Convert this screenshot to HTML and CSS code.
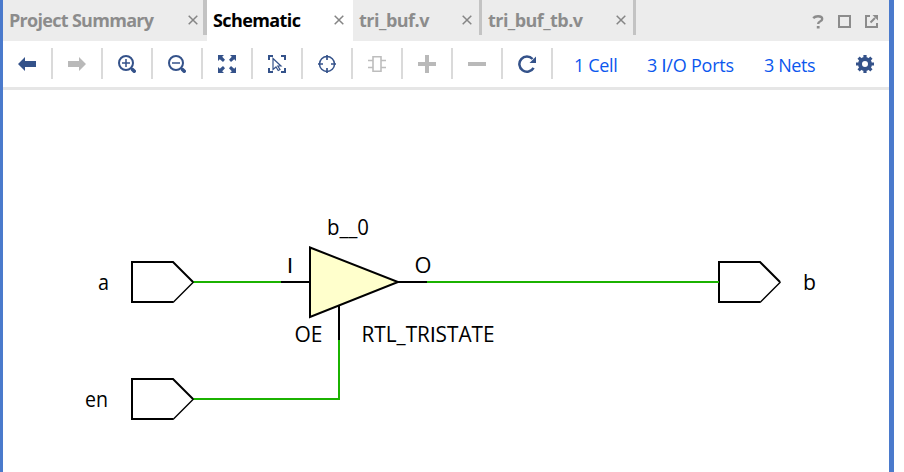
FILE: index.html
```html
<!DOCTYPE html>
<html lang="en">
<head>
<meta charset="utf-8">
<title>Schematic</title>
<link rel="stylesheet" href="styles.css">
</head>
<body>
<main class="window">
  <header class="tabs">
    <div class="tab tab-summary"><span class="label">Project Summary</span><svg class="close" viewBox="0 0 10 10"><path d="M.7.7l8.6 8.6M9.3.7L.7 9.3"/></svg></div>
    <div class="tab tab-schematic active"><span class="label">Schematic</span><svg class="close" viewBox="0 0 10 10"><path d="M.7.7l8.6 8.6M9.3.7L.7 9.3"/></svg></div>
    <div class="tab tab-buf"><span class="label">tri_buf.v</span><svg class="close" viewBox="0 0 10 10"><path d="M.7.7l8.6 8.6M9.3.7L.7 9.3"/></svg></div>
    <div class="tab tab-tb"><span class="label">tri_buf_tb.v</span><svg class="close" viewBox="0 0 10 10"><path d="M.7.7l8.6 8.6M9.3.7L.7 9.3"/></svg></div>
    <div class="controls">
      <svg width="12" height="14" viewBox="0 0 12 14"><path d="M1.2 3.2Q3 1.3 6 1.3Q10.2 1.3 10.2 4Q10.2 5.4 8 6.5Q6.2 7.3 6.2 9" fill="none" stroke="#8c8c8c" stroke-width="2.4"/><path d="M4.8 11h2.8v2.5H4.8z" fill="#8c8c8c"/></svg>
      <svg width="13" height="13" viewBox="0 0 13 13"><path d="M1 1h11v11H1z" fill="none" stroke="#8c8c8c" stroke-width="2"/></svg>
      <svg width="13" height="13" viewBox="0 0 13 13"><path d="M5 1H1v11h11V8M5.500 7.500L10 3" fill="none" stroke="#8c8c8c" stroke-width="2"/><path d="M7.500 0H13v5.500z" fill="#8c8c8c"/></svg>
    </div>
  </header>
  <nav class="toolbar">
    <div class="tool"><svg viewBox="0 0 18 18"><path d="M0 9l7-7v4h11v6H7v4z" fill="#34528a"/></svg></div>
    <div class="tool"><svg viewBox="0 0 18 18"><path d="M18 9l-7-7v4H0v6h11v4z" fill="#b9b9b9"/></svg></div>
    <div class="tool"><svg viewBox="0 0 18 18"><g fill="none" stroke="#34528a"><circle cx="8" cy="8" r="7" stroke-width="2"/><path d="M4 8h8M8 4v8" stroke-width="1.500"/><path d="M13 13l1 1" stroke-width="2"/><path d="M14.700 14.700l1.500 1.500" stroke-width="3.600" stroke-linecap="round"/></g></svg></div>
    <div class="tool"><svg viewBox="0 0 18 18"><g fill="none" stroke="#34528a"><circle cx="8" cy="8" r="7" stroke-width="2"/><path d="M4 8h8" stroke-width="1.500"/><path d="M13 13l1 1" stroke-width="2"/><path d="M14.700 14.700l1.500 1.500" stroke-width="3.600" stroke-linecap="round"/></g></svg></div>
    <div class="tool"><svg viewBox="0 0 18 18"><path d="M0 0h6L4.200 1.800 7 4.800 5 7 1.800 4.200 0 6zM18 0v6l-1.800-1.800L13 7l-2-2.200 2.800-3L12 0zM0 18v-6l1.800 1.800L5 11l2 2.200-2.800 3L6 18zM18 18h-6l1.800-1.800L11 13.200l2-2.200 3.200 2.800L18 12z" fill="#34528a"/></svg></div>
    <div class="tool"><svg viewBox="0 0 18 18"><path d="M1 5V1h4M13 1h4v4M17 13v4h-4M5 17H1v-4" fill="none" stroke="#34528a" stroke-width="2"/><path d="M5 3.500l8 7.500H9.800l2.200 3.500-1.800 1L8 12l-3 2.500z" fill="#fff" stroke="#34528a" stroke-width="1.200"/></svg></div>
    <div class="tool"><svg viewBox="0 0 18 18"><g fill="none" stroke="#34528a"><circle cx="9" cy="9" r="7.500" stroke-width="1.500"/><path d="M9 0v5M9 13v5M0 9h5M13 9h5" stroke-width="1.700"/></g></svg></div>
    <div class="tool"><svg viewBox="0 0 18 18"><path d="M5 1.700h8v14.600H5zM0 5.500h5M0 12.500h5M13 5.500h5M13 12.500h5" fill="none" stroke="#bdbdbd" stroke-width="1.600"/></svg></div>
    <div class="tool"><svg viewBox="0 0 18 18"><path d="M0 9h18M9 0v18" stroke="#b9b9b9" stroke-width="4"/></svg></div>
    <div class="tool"><svg viewBox="0 0 18 18"><path d="M0 9h18" stroke="#b9b9b9" stroke-width="4"/></svg></div>
    <div class="tool"><svg viewBox="0 0 18 18"><path d="M15.600 12.800A7.600 7.600 0 1 1 14.600 4" fill="none" stroke="#34528a" stroke-width="2.500"/><path d="M18 1.500V8h-6.500z" fill="#34528a"/></svg></div>
    <a class="link cells">1 Cell</a>
    <a class="link ports">3 <span class="bar">I</span>/O Ports</a>
    <a class="link nets">3 Nets</a>
    <svg class="gear" viewBox="0 0 18 18"><g stroke="#34528a" fill="none"><circle cx="9" cy="9" r="5" stroke-width="4"/><path d="M9 0v3M9 15v3M0 9h3M15 9h3M2.600 2.600l2.200 2.200M13.200 13.200l2.200 2.200M2.600 15.400l2.200-2.200M13.200 4.800l2.200-2.200" stroke-width="3.200"/></g></svg>
  </nav>
  <section class="canvas">
    <svg width="886" height="382" viewBox="3 90 886 382">
      <g class="wire">
        <path d="M193 282H281"/>
        <path d="M427 282H719"/>
        <path d="M193 399H339V340"/>
      </g>
      <g class="outline">
        <path d="M281 282H310M398 282H427M339 340V306"/>
        <path class="cell" d="M310 247.500L398 282L310 317Z"/>
        <path d="M193 282L173 262H132V302H173"/>
        <path d="M193 399L173 379H132V419H173"/>
        <path d="M780 282L760 262H719V302H760"/>
        <path class="thin" d="M193.500 282L173 302.500M193.500 399L173 419.500M780.500 282L760 302.500"/>
      </g>
      <path class="wire" d="M712 282H719"/>
      <g class="names">
        <text x="98" y="290" textLength="11" lengthAdjust="spacingAndGlyphs">a</text>
        <text x="85" y="407" textLength="23" lengthAdjust="spacingAndGlyphs">en</text>
        <text x="803" y="290" textLength="13" lengthAdjust="spacingAndGlyphs">b</text>
        <text x="327" y="235" textLength="42" lengthAdjust="spacingAndGlyphs">b__0</text>
        <text class="bar" x="287" y="273" textLength="6" lengthAdjust="spacingAndGlyphs">I</text>
        <text x="414.500" y="273" textLength="17" lengthAdjust="spacingAndGlyphs">O</text>
        <text x="294.500" y="342" textLength="28" lengthAdjust="spacingAndGlyphs">OE</text>
        <text x="361.500" y="342" textLength="133" lengthAdjust="spacingAndGlyphs">RTL_TR<tspan class="bar">I</tspan>STATE</text>
      </g>
    </svg>
  </section>
</main>
</body>
</html>
```
FILE: styles.css
```css
* { box-sizing: border-box; }
body {
  margin: 0;
  background: #fff;
  font-family: "Open Sans", "Noto Sans", sans-serif;
}
svg { display: block; flex: none; }
.window {
  width: 894px;
  height: 472px;
  border-left: 3px solid #4a7acc;
  border-right: 5px solid #4a7acc;
  overflow: hidden;
}
.tabs {
  display: flex;
  height: 41px;
  background: #ececec;
}
.tab {
  display: flex;
  align-items: center;
  justify-content: space-between;
  height: 35px;
  padding: 5px 8px 0 6px;
  border-right: 3px solid #c3c3c3;
  color: #8c8c8c;
  font-size: 18px;
  font-weight: 700;
  line-height: 26px;
  white-space: nowrap;
}
.tab-summary { width: 204px; padding-right: 5px; border-right: 4px solid #c3c3c3; }
.tab-schematic { width: 146px; }
.tab-buf { width: 129px; padding-right: 7px; }
.tab-tb { width: 154px; padding-right: 7px; }
.tab.active {
  height: 41px;
  padding-right: 9px;
  padding-bottom: 6px;
  border-right: 0;
  background: #fff;
  color: #000;
}
.tab-summary .label { letter-spacing: -.7px; }
.tab-schematic .label { letter-spacing: -.6px; }
.tab-buf .label { letter-spacing: -.5px; }
.tab-tb .label { letter-spacing: -.55px; }
.close { width: 10px; height: 10px; }
.close path { fill: none; stroke: #858585; stroke-width: 1.5; }
.controls {
  display: flex;
  align-items: center;
  gap: 14px;
  height: 41px;
  margin-left: auto;
  padding: 2px 11px 0 0;
}
.toolbar {
  display: flex;
  align-items: center;
  height: 49px;
  padding-bottom: 1px;
  border-bottom: 3px solid #e6e6e6;
}
.tool {
  display: flex;
  align-items: center;
  justify-content: center;
  width: 50px;
  height: 31px;
  border-right: 2px solid #dadada;
}
.tool svg, .gear { width: 18px; height: 18px; }
.link {
  color: #0b57ee;
  font-size: 18px;
  line-height: 26px;
  padding-top: 3px;
  white-space: nowrap;
}
.bar { font-family: Roboto, "Liberation Sans", sans-serif; }
.cells { width: 73px; margin-left: 21px; letter-spacing: -.35px; }
.ports { width: 117px; letter-spacing: -.2px; }
.nets { letter-spacing: -.4px; }
.gear { margin-left: auto; margin-right: 15px; }
.canvas { height: 382px; }
.wire { fill: none; stroke: #1bb200; stroke-width: 2; }
.outline { fill: none; stroke: #000; stroke-width: 2; }
.cell { fill: #ffffcc; }
.thin { stroke-width: 1.4; }
.names { font-size: 21px; fill: #000; }
```
